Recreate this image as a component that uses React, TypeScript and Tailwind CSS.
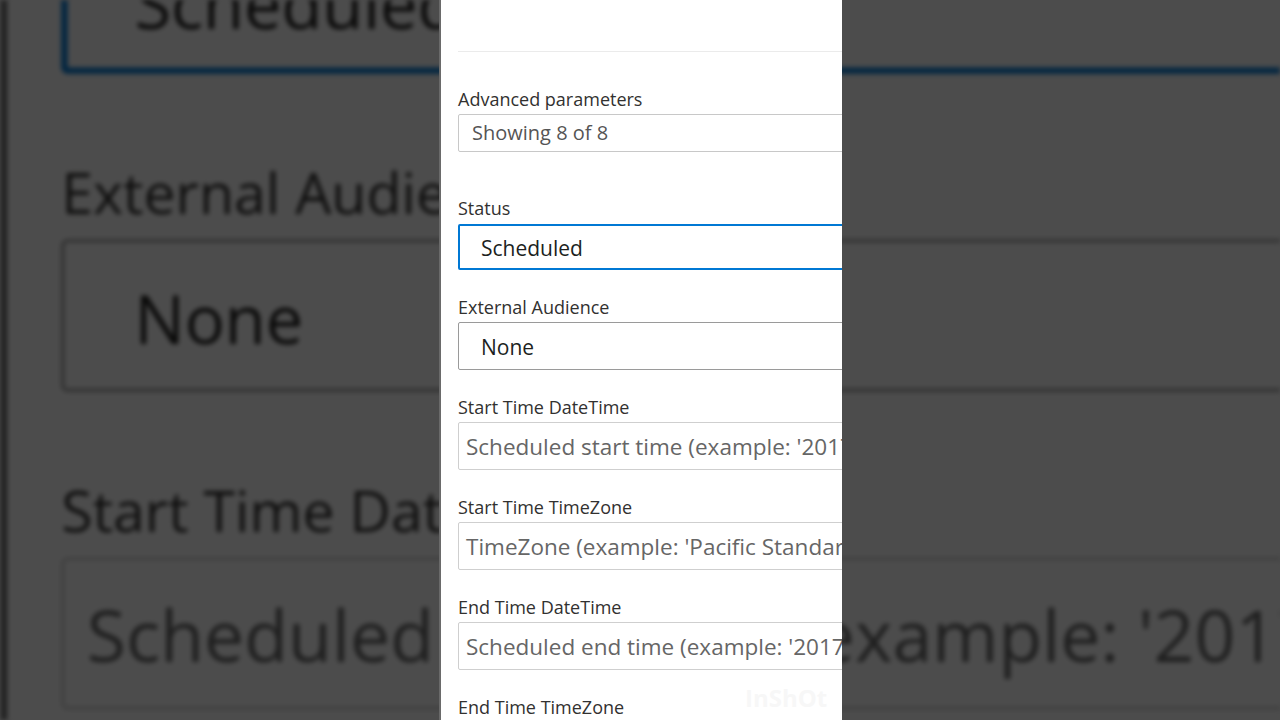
import React from 'react';

type Field = {
  label: string;
  value: string;
  kind: 'select' | 'input';
};

const fields: Field[] = [
  { label: 'External Audience', value: 'None', kind: 'select' },
  { label: 'Start Time DateTime', value: "Scheduled start time (example: '2017-01-01T08:00:00')", kind: 'input' },
  { label: 'Start Time TimeZone', value: "TimeZone (example: 'Pacific Standard Time')", kind: 'input' },
  { label: 'End Time DateTime', value: "Scheduled end time (example: '2017-01-01T09:00:00')", kind: 'input' },
];

function Label({ children }: { children: React.ReactNode }) {
  return <div className="h-[24px] text-[18px] leading-[24px] text-[#323130] whitespace-nowrap">{children}</div>;
}

function FormPanel() {
  return (
    <div className="w-[403px] h-[720px] bg-white border-l-2 border-[#6a6a6a] overflow-hidden font-['Open_Sans',sans-serif]">
      <div className="w-[760px] pl-[17px]">
        <div className="h-[52px] border-b border-[#ebebeb]" />

        {/* Advanced parameters */}
        <div className="mt-[35px]">
          <Label>Advanced parameters</Label>
          <div className="mt-[3px] h-[38px] flex items-center pl-[13px] border border-[#c8c8c8] rounded-[2px] text-[20px] text-[#555] whitespace-nowrap">
            Showing 8 of 8
          </div>
        </div>

        {/* Status */}
        <div className="mt-[44px]">
          <Label>Status</Label>
          <div className="mt-[4px] h-[46px] flex items-center pt-[3px] pl-[21px] border-2 border-[#0078d4] rounded-[2px] text-[21px] text-[#201f1e] whitespace-nowrap">
            Scheduled
          </div>
        </div>

        <div className="flex flex-col gap-[25px] mt-[25px]">
          {fields.map((f) => (
            <div key={f.label}>
              <Label>{f.label}</Label>
              {f.kind === 'select' ? (
                <div className="mt-[3px] h-[48px] flex items-center pt-[3px] pl-[22px] border border-[#9a9a9a] rounded-[2px] text-[21px] text-[#201f1e] whitespace-nowrap">
                  {f.value}
                </div>
              ) : (
                <div className="mt-[3px] h-[48px] flex items-center pt-[2px] pl-[7px] border border-[#cfcfcf] rounded-[2px] text-[22.5px] text-[#666] whitespace-nowrap">
                  {f.value}
                </div>
              )}
            </div>
          ))}
          <div>
            <Label>End Time TimeZone</Label>
            <div className="mt-[3px] h-[48px] border border-[#cfcfcf] rounded-[2px]" />
          </div>
        </div>
      </div>
    </div>
  );
}

export default function App() {
  return (
    <div className="relative w-[1280px] h-[720px] overflow-hidden bg-[#4b4b4b]">
      {/* Blurred, zoomed backdrop of the same frame */}
      <div aria-hidden className="absolute inset-0 overflow-hidden blur-[2.5px] brightness-30">
        <div className="w-[1280px] h-[720px] scale-[3.18] origin-center pl-[439px]">
          <FormPanel />
        </div>
      </div>

      {/* Foreground frame */}
      <div className="relative pl-[439px]">
        <FormPanel />
        <div className="absolute left-[745px] top-[680px] text-[24px] font-bold text-[#f7f7f7] font-['Open_Sans',sans-serif] select-none">
          InShOt
        </div>
      </div>
    </div>
  );
}
